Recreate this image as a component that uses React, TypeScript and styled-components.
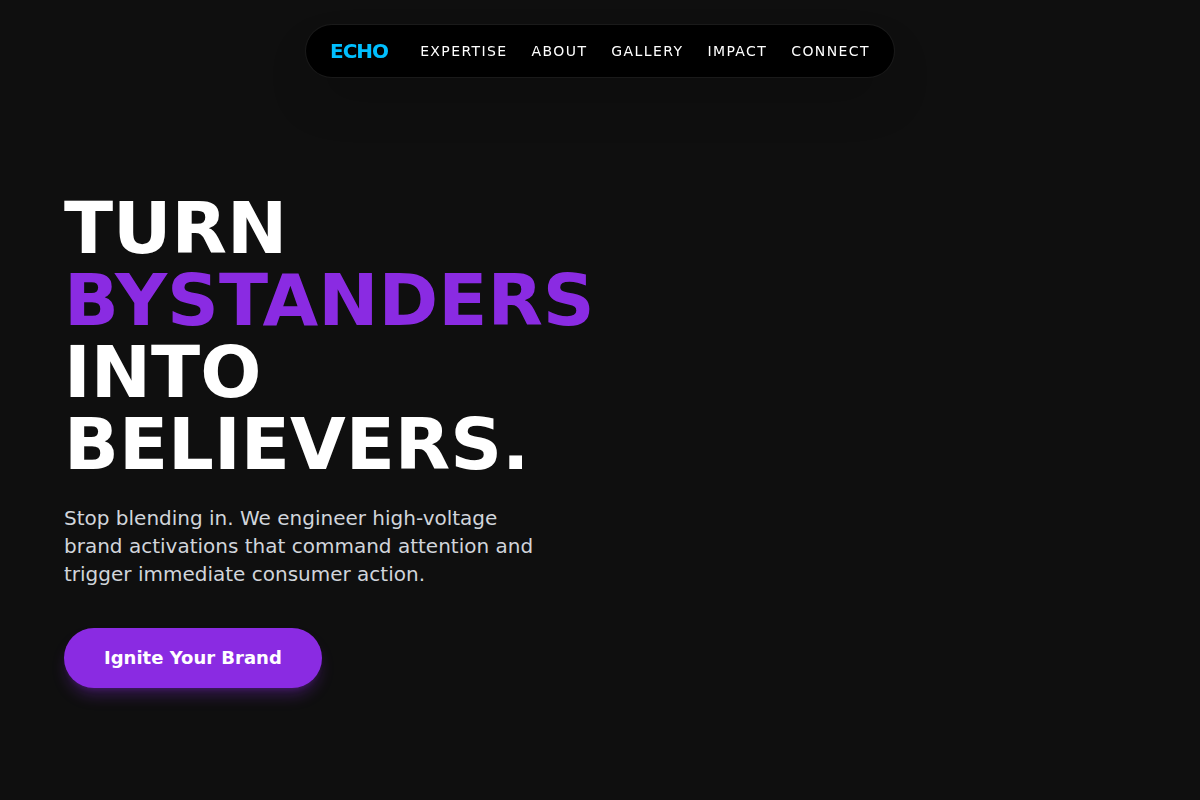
import React from "react";
import styled, { createGlobalStyle } from "styled-components";

const GlobalStyle = createGlobalStyle`
  *, *::before, *::after { box-sizing: border-box; }
  body {
    margin: 0;
    background: #0f0f0f;
    color: #ffffff;
    font-family: "DejaVu Sans", sans-serif;
    line-height: 24px;
  }
`;

/* Floats over the page while it scrolls */
const Header = styled.header`
  position: fixed;
  top: 24px;
  left: 0;
  right: 0;
  z-index: 10;
  display: flex;
  justify-content: center;
`;

const Nav = styled.nav`
  display: flex;
  align-items: center;
  gap: 32px;
  padding: 12px 24px;
  border: 1px solid rgba(255, 255, 255, 0.1);
  border-radius: 999px;
  background: #000000;
  box-shadow: 0 25px 50px -12px rgba(0, 0, 0, 0.25);
`;

const Logo = styled.a`
  color: #00bfff;
  font-size: 20px;
  font-weight: 700;
  line-height: 28px;
  letter-spacing: -1px;
  text-decoration: none;
`;

const NavLinks = styled.div`
  display: flex;
  gap: 24px;
`;

const NavLink = styled.a`
  color: #ffffff;
  font-size: 14px;
  line-height: 20px;
  letter-spacing: 0.1em;
  text-decoration: none;
  text-transform: uppercase;
`;

const Hero = styled.main`
  min-height: 100vh;
  display: flex;
  flex-direction: column;
  align-items: flex-start;
  justify-content: center;
  padding: 80px 64px 0;
`;

const Title = styled.h1`
  margin: 0 0 24px;
  max-width: 560px;
  font-size: 72px;
  font-weight: 700;
  line-height: 72px;
  text-transform: uppercase;
`;

const Accent = styled.span`
  color: #8a2be2;
`;

const Lead = styled.p`
  margin: 0 0 40px;
  max-width: 480px;
  color: #d1d5db;
  font-size: 20px;
  line-height: 28px;
`;

const CallToAction = styled.button`
  padding: 16px 40px;
  border: 0;
  border-radius: 999px;
  background: #8a2be2;
  color: #ffffff;
  font-family: inherit;
  font-size: 18px;
  font-weight: 700;
  line-height: 28px;
  cursor: pointer;
  box-shadow: 0 10px 15px -3px rgba(138, 43, 226, 0.3),
    0 4px 6px -4px rgba(138, 43, 226, 0.3);
`;

const sections = ["Expertise", "About", "Gallery", "Impact", "Connect"];

export default function App() {
  return (
    <>
      <GlobalStyle />
      <Header>
        <Nav aria-label="Main">
          <Logo href="#">ECHO</Logo>
          <NavLinks>
            {sections.map((name) => (
              <NavLink key={name} href={`#${name.toLowerCase()}`}>
                {name}
              </NavLink>
            ))}
          </NavLinks>
        </Nav>
      </Header>
      <Hero>
        <Title>
          Turn <Accent>Bystanders</Accent> Into Believers.
        </Title>
        <Lead>
          Stop blending in. We engineer high-voltage brand activations that
          command attention and trigger immediate consumer action.
        </Lead>
        <CallToAction type="button">Ignite Your Brand</CallToAction>
      </Hero>
    </>
  );
}
